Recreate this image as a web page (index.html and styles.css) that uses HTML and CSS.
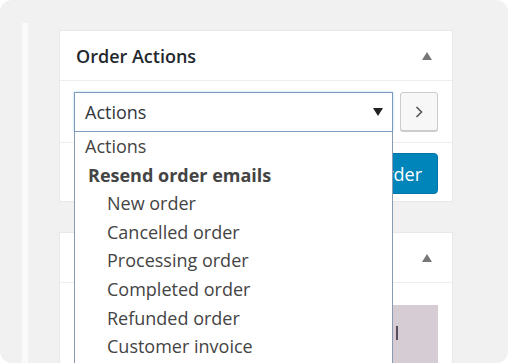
FILE: index.html
```html
<!DOCTYPE html>
<html lang="en">
<head>
  <meta charset="UTF-8">
  <meta name="viewport" content="width=device-width, initial-scale=1.0">
  <title>Order Actions</title>
  <link rel="stylesheet" href="styles.css">
</head>
<body>

  <div class="screen">
    <div class="menu-edge"></div>

    <div class="side-column">
      <!-- Order Actions box -->
      <div class="postbox">
        <div class="postbox-header">
          <h2 class="postbox-title">Order Actions</h2>
          <span class="toggle-arrow"></span>
        </div>

        <div class="action-row">
          <div class="select-wrap">
            <div class="select-box">
              <span>Actions</span>
              <span class="select-arrow"></span>
            </div>

            <!-- open dropdown list -->
            <ul class="dropdown">
              <li class="option">Actions</li>
              <li class="group-label">Resend order emails</li>
              <li class="option child">New order</li>
              <li class="option child">Cancelled order</li>
              <li class="option child">Processing order</li>
              <li class="option child">Completed order</li>
              <li class="option child">Refunded order</li>
              <li class="option child">Customer invoice</li>
            </ul>
          </div>
          <button class="go-button">
            <svg width="8" height="12" viewBox="0 0 8 12"><path d="M1.5 1 L6.5 6 L1.5 11" fill="none" stroke="#555" stroke-width="1.6"/></svg>
          </button>
        </div>

        <div class="major-actions">
          <span class="trash-dot"></span>
          <button class="save-button">Save Order</button>
        </div>
      </div>

      <!-- next box (title hidden under the dropdown) -->
      <div class="postbox">
        <div class="postbox-header header-end">
          <span class="toggle-arrow"></span>
        </div>
        <div class="image-body">
          <div class="image-preview"><span class="caret"></span></div>
        </div>
      </div>
    </div>
  </div>

</body>
</html>
```

FILE: styles.css
```css
* {
  margin: 0;
  padding: 0;
  box-sizing: border-box;
}

body {
  font-family: "Open Sans", "Noto Sans", Arial, sans-serif;
  background-color: #fff;
  width: 508px;
  height: 363px;
  overflow: hidden;
}

.screen {
  display: flex;
  width: 508px;
  height: 363px;
  background-color: #f1f1f1;
  border-radius: 12px;
  overflow: hidden;
}

.menu-edge {
  width: 6px;
  margin-left: 22px;
  margin-top: 23px;
  background-color: #fafafa;
}

.side-column {
  width: 394px;
  margin-left: 31px;
  padding-top: 30px;
}

.postbox {
  background-color: #fff;
  border: 1px solid #e8e8e8;
  margin-bottom: 30px;
}

.postbox-header {
  display: flex;
  justify-content: space-between;
  align-items: center;
  height: 50px;
  padding: 0 20px 0 16px;
  border-bottom: 1px solid #eee;
}

.header-end {
  justify-content: flex-end;
}

.postbox-title {
  font-size: 18px;
  font-weight: 600;
  color: #23282d;
}

.toggle-arrow {
  width: 0;
  height: 0;
  border-left: 5px solid transparent;
  border-right: 5px solid transparent;
  border-bottom: 8px solid #777;
}

.action-row {
  display: flex;
  gap: 7px;
  padding: 11px 14px 10px 14px;
  border-bottom: 1px solid #eee;
}

.select-wrap {
  position: relative;
  width: 319px;
}

.select-box {
  display: flex;
  justify-content: space-between;
  align-items: center;
  height: 40px;
  padding: 0 9px 0 10px;
  border: 1px solid #7e9cc0;
  box-shadow: 0 0 2px rgba(30, 140, 190, 0.4);
  font-size: 18px;
  color: #32373c;
}

.select-arrow {
  width: 0;
  height: 0;
  border-left: 5px solid transparent;
  border-right: 5px solid transparent;
  border-top: 8px solid #222;
}

.go-button {
  width: 38px;
  height: 39px;
  background-color: #f7f7f7;
  border: 1px solid #ccc;
  border-radius: 3px;
  box-shadow: 0 1px 0 #ccc;
  display: flex;
  justify-content: center;
  align-items: center;
}

.dropdown {
  position: absolute;
  top: 40px;
  left: 0;
  width: 319px;
  height: 240px;
  list-style: none;
  background-color: #fff;
  border-left: 1px solid #8a9ab0;
  border-right: 1px solid #8a9ab0;
  z-index: 5;
}

.dropdown li {
  height: 28.6px;
  line-height: 28.6px;
  font-size: 18px;
  color: #444;
}

.option {
  padding-left: 10px;
}

.group-label {
  padding-left: 13px;
  font-weight: 700;
  color: #23282d;
}

.option.child {
  padding-left: 32px;
}

.major-actions {
  display: flex;
  justify-content: space-between;
  align-items: center;
  padding: 10px 14px 7px 14px;
}

.trash-dot {
  width: 2px;
  height: 2px;
  background-color: #555;
  margin-top: 12px;
}

.save-button {
  height: 41px;
  padding: 0 15px;
  font-family: inherit;
  font-size: 18px;
  color: #fff;
  background-color: #0085ba;
  border: 1px solid #0073aa;
  border-radius: 4px;
}

.image-body {
  padding: 22px 14px 0 14px;
}

.image-preview {
  height: 80px;
  background-color: #d6cdd4;
  display: flex;
  justify-content: flex-end;
  padding: 21px 40px 0 0;
}

.caret {
  width: 2px;
  height: 14px;
  background-color: #5a4a5e;
}
```
